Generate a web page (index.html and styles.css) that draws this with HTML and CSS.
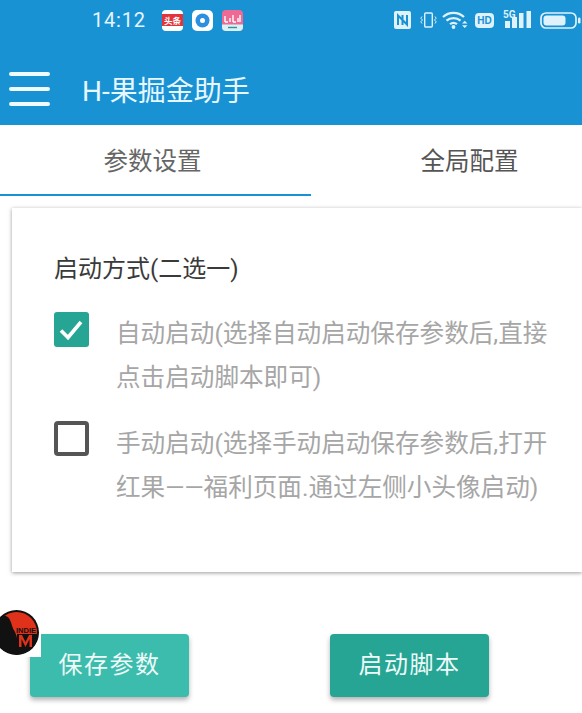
FILE: index.html
```html
<!DOCTYPE html>
<html lang="zh">
<head>
<meta charset="utf-8">
<title>H-果掘金助手</title>
<link rel="stylesheet" href="styles.css">
</head>
<body>
<header class="appbar">
  <div class="status">
    <div class="status-left">
      <span class="time">14:12</span>
      <svg class="app" viewBox="0 0 21 21"><rect width="21" height="21" rx="4" fill="#fff"/><rect x="0" y="4" width="21" height="12" fill="#e2343b"/><text x="10.500" y="13.500" font-size="8.500" text-anchor="middle" fill="#fff" font-family="Noto Sans CJK SC" font-weight="700">头条</text></svg>
      <svg class="app" viewBox="0 0 21 21"><rect width="21" height="21" rx="5" fill="#fff"/><circle cx="10.500" cy="10.500" r="7" fill="#2d8fe0"/><circle cx="10.500" cy="10.500" r="2.500" fill="#fff"/></svg>
      <svg class="app" viewBox="0 0 21 21"><rect width="21" height="21" rx="4" fill="#ee6a94"/><path d="M0 14.500H21V17a4 4 0 0 1-4 4H4a4 4 0 0 1-4-4Z" fill="#d8f3f5"/><path d="M3 12V6M3 12H6M8 12V8M11 12V5M11 12H14M16 12V8M18 12V5" stroke="#fff" stroke-width="1.400" fill="none"/><path d="M6 17.500H15" stroke="#3b8f9c" stroke-width="1.400"/></svg>
    </div>
    <div class="status-right">
      <svg class="nfc" viewBox="0 0 17 18"><rect width="17" height="18" rx="2" fill="#dff1fb"/><path d="M4 14V4.500L8.500 9V4M8.500 14V9L13 13.500V4" stroke="#1992d4" stroke-width="2" fill="none"/></svg>
      <svg class="vib" viewBox="0 0 17 16"><rect x="4.700" y="1" width="7.600" height="14" rx="1" stroke="#dff1fb" stroke-width="1.400" fill="none"/><path d="M2 4.500l-1.200 1.700 1.700 1.800-1.700 1.800 1.200 1.700M15 4.500l1.200 1.700-1.700 1.800 1.700 1.800-1.200 1.700" stroke="#dff1fb" stroke-width="1" fill="none"/></svg>
      <svg class="wifi" viewBox="0 0 26 18"><path d="M1 6C7 .5 16 .5 22 6M4.500 9.700C8.500 6.200 14.500 6.200 18.500 9.700M8 13.200C10 11.700 13 11.700 15 13.200" stroke="#dff1fb" stroke-width="2.300" fill="none"/><circle cx="11.500" cy="16" r="1.900" fill="#dff1fb"/><path d="M20 12.500h5.500l-2.750-2.800ZM20 14.300h5.500l-2.750 2.800Z" fill="#dff1fb"/></svg>
      <span class="hd">HD</span>
      <span class="net">
        <span class="five-g">5G</span>
        <svg class="bars" viewBox="0 0 28 17"><rect x="2" y="10" width="5" height="7" fill="#dff1fb"/><rect x="9" y="6" width="5" height="11" fill="#dff1fb"/><rect x="16" y="2" width="4.500" height="15" fill="#dff1fb"/><rect x="23.500" y="0" width="4.500" height="17" fill="#dff1fb"/></svg>
      </span>
      <svg class="battery" viewBox="0 0 42 17"><rect x="1" y="1" width="35" height="15" rx="5" stroke="#dff1fb" stroke-width="1.700" fill="none"/><rect x="3.500" y="3.500" width="22" height="10" rx="3" fill="#dff1fb"/><rect x="38" y="5.500" width="2.500" height="6" rx="1.200" fill="#dff1fb"/></svg>
    </div>
  </div>
  <div class="toolbar">
    <div class="menu"><span></span><span></span><span></span></div>
    <h1 class="title">H-果掘金助手</h1>
  </div>
</header>

<nav class="tabs">
  <div class="tab tab-active">参数设置</div>
  <div class="tab tab-other">全局配置</div>
</nav>

<main class="card">
  <h2 class="card-title">启动方式(二选一)</h2>
  <div class="option option-first">
    <span class="check check-on"><svg viewBox="0 0 35 35"><path d="M7 18.500L14 25.500L27 10" stroke="#fff" stroke-width="3.600" fill="none"/></svg></span>
    <p class="label">自动启动(选择自动启动保存参数后,直接点击启动脚本即可)</p>
  </div>
  <div class="option option-second">
    <span class="check check-off"></span>
    <p class="label">手动启动(选择手动启动保存参数后,打开红果——福利页面.通过左侧小头像启动)</p>
  </div>
</main>

<footer class="actions">
  <button class="btn btn-save">保存参数</button>
  <button class="btn btn-run">启动脚本</button>
  <svg class="avatar" viewBox="0 0 41 47"><defs><clipPath id="disc"><circle cx="16.500" cy="22.500" r="22"/></clipPath></defs><circle cx="16.500" cy="22.500" r="22.500" fill="#111"/><circle cx="16.500" cy="22.500" r="20.500" fill="#e0321b"/><g clip-path="url(#disc)"><path d="M-6 8C2 4 8 5 10 10C12 14 12 18 15 22C17 27 18 30 17 34L24 38V46H-6Z" fill="#111"/><path d="M17 24H38V34L30 46H17Z" fill="#111"/><path d="M19 25L19 37H21.500V29L25.500 37L29.500 29V37H32V25H29L25.500 32L22 25Z" fill="#e0321b"/></g><text x="26" y="22.500" font-size="7.500" text-anchor="middle" fill="#111" font-family="Liberation Sans" font-weight="700">INDIE</text></svg>
</footer>
</body>
</html>
```
FILE: styles.css
```css
* { box-sizing: border-box; }
html, body { margin: 0; padding: 0; }
body {
  width: 582px;
  height: 713px;
  overflow: hidden;
  background: #fff;
  font-family: "Roboto", "Noto Sans CJK SC", sans-serif;
}
.appbar { height: 125px; background: #1992d4; }
.status {
  height: 40px;
  display: flex;
  justify-content: space-between;
  align-items: center;
}
.status-left { display: flex; align-items: center; padding-left: 92px; }
.time { color: #e6f5fd; font-size: 20px; letter-spacing: .8px; width: 70px; }
.app { width: 21px; height: 21px; margin-right: 9px; }
.status-right { display: flex; align-items: flex-start; height: 20px; }
.nfc { width: 17px; height: 18px; margin-top: 1px; }
.vib { width: 17px; height: 16px; margin: 2px 0 0 9px; }
.wifi { width: 26px; height: 18px; margin: 1px 0 0 5px; }
.hd {
  margin: 3px 0 0 7px; width: 19px; height: 15px;
  border-radius: 4px;
  background: #dff1fb; color: #1992d4;
  font: 700 10px/15px "Liberation Sans", sans-serif;
  text-align: center;
}
.net { position: relative; width: 28px; height: 20px; margin-left: 9px; }
.bars { position: absolute; left: 0; top: 1px; width: 28px; height: 17px; }
.five-g {
  position: absolute; left: 0; top: 0;
  font: 700 10px/9px "Roboto", sans-serif;
  color: #dff1fb;
}
.battery { width: 42px; height: 17px; margin: 2px 0 0 9px; }
.toolbar { display: flex; align-items: center; height: 85px; padding: 13px 0 0 9px; }
.menu { display: flex; flex-direction: column; gap: 11px; width: 41px; }
.menu span { height: 4px; border-radius: 2px; background: #eefaff; }
.title {
  margin: 6px 0 0 32px;
  color: #e6f7ff;
  font-size: 28px;
  font-weight: 400;
  line-height: 32px;
}
.tabs { display: flex; height: 71px; }
.tab {
  height: 71px;
  text-align: center;
  font-size: 24.500px;
  line-height: 73px;
}
.tab-active { width: 311px; padding-right: 6px; border-bottom: 2px solid #1992d4; color: #666; }
.tab-other { width: 271px; padding-left: 46px; color: #555; }
.card {
  margin: 12px 0 0 12px;
  height: 364px;
  background: #fff;
  box-shadow: 0 1px 4px rgba(0, 0, 0, .4);
  padding: 45px 0 0 42px;
}
.card-title {
  margin: 0;
  font-size: 24px;
  font-weight: 400;
  line-height: 32px;
  color: #3a3a3a;
}
.option { display: flex; gap: 27px; }
.option-first { margin-top: 27px; }
.option-second { margin-top: 21px; }
.option-second .label { padding-top: 1px; }
.check { flex: none; width: 35px; height: 35px; border-radius: 3px; }
.check svg { display: block; width: 35px; height: 35px; }
.check-on { background: #26a595; }
.check-off { border: 4px solid #555; border-radius: 4px; }
.label {
  margin: 0;
  width: 442px;
  font-size: 24.600px;
  line-height: 44px;
  color: #a6a6a6;
}
.actions {
  position: relative;
  height: 141px;
  padding: 62px 0 0 30px;
  display: flex;
  align-items: flex-start;
  gap: 141px;
}
.btn {
  width: 159px;
  height: 63px;
  padding: 0 0 6px;
  border: 0;
  border-radius: 4px;
  color: #eefaf8;
  font: 400 24px "Roboto", "Noto Sans CJK SC", sans-serif;
  letter-spacing: 1.500px;
  box-shadow: 0 3px 5px rgba(0, 0, 0, .3);
}
.btn-save { background: #3cbcac; }
.btn-run { background: #26a595; }
.avatar {
  position: absolute;
  left: 0;
  top: 38px;
  width: 41px;
  height: 47px;
  background: #fff;
}
```
